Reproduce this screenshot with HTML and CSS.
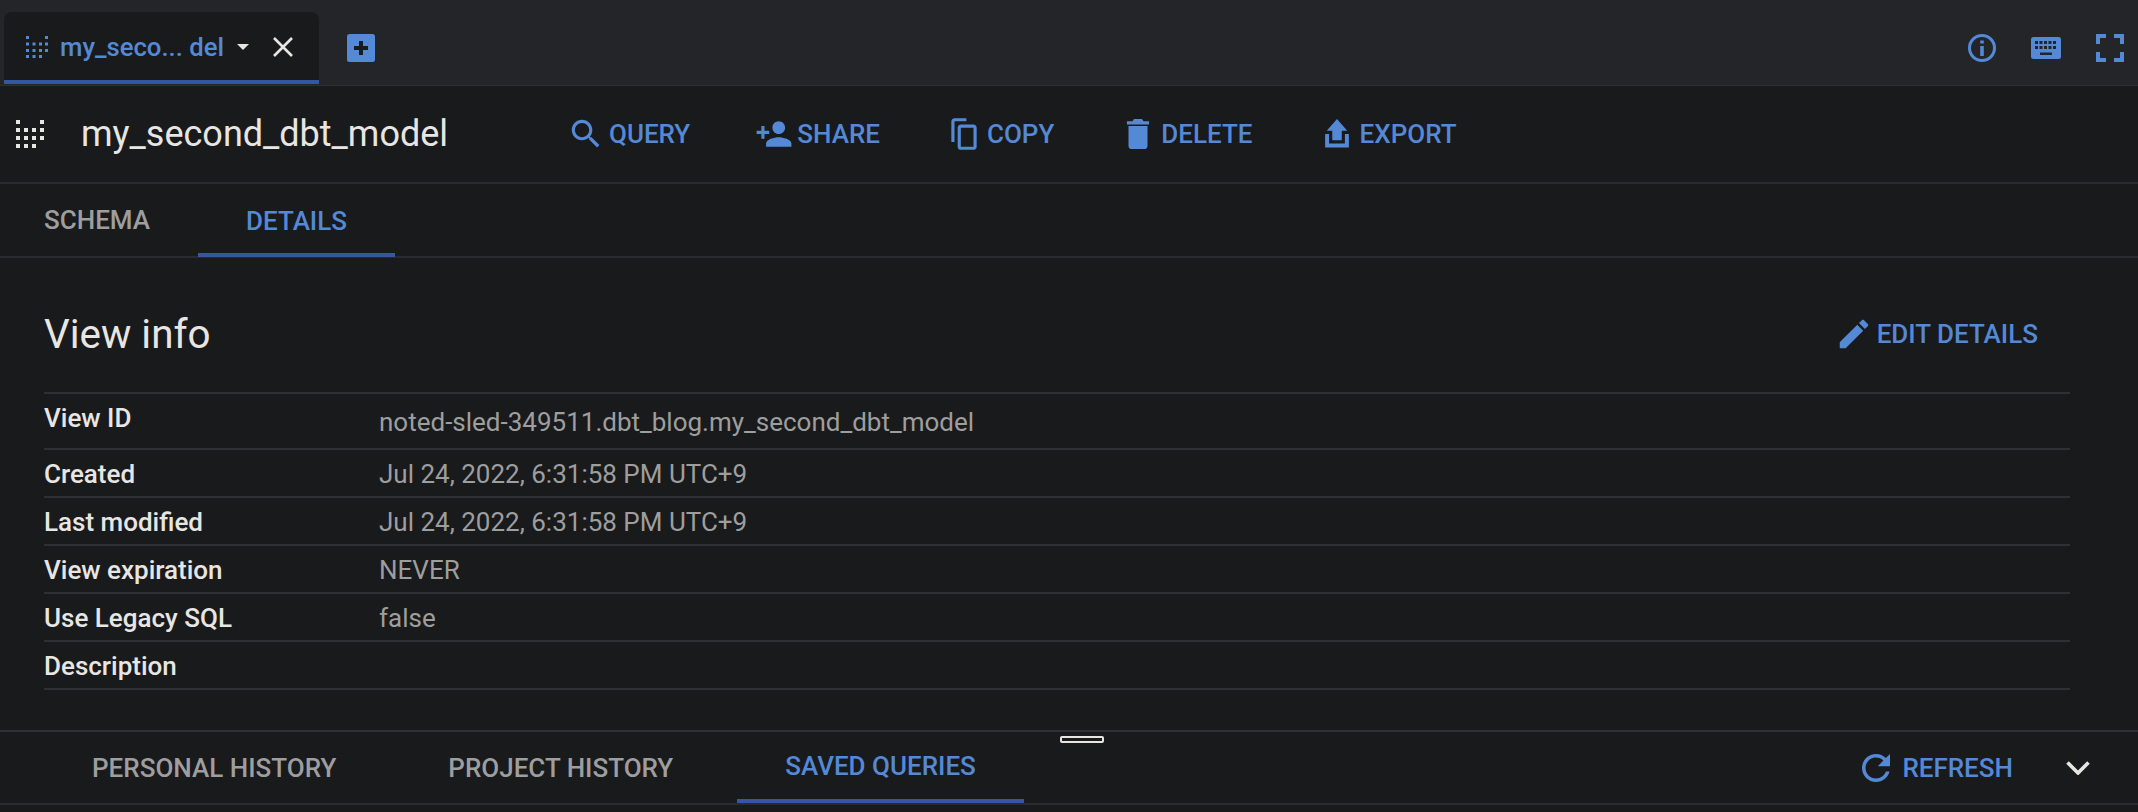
FILE: index.html
```html
<!DOCTYPE html>
<html lang="en">
<head>
<meta charset="utf-8">
<title>my_second_dbt_model</title>
<link rel="stylesheet" href="styles.css">
</head>
<body>
<div class="page">
  <header class="tabbar">
    <div class="tab">
      <svg class="tab-grid" viewBox="0 0 24 22" fill="currentColor"><path d="M0 0h3v3H0zM19 0h3v3h-3zM0 6.500h3v3H0zM6.500 6.500h3v3h-3zM13 6.500h3v3h-3zM19 6.500h3v3h-3zM0 13h3v3H0zM6.500 13h3v3h-3zM13 13h3v3h-3zM19 13h3v3h-3zM0 19h3v3H0zM6.500 19h3v3h-3zM13 19h3v3h-3z"/></svg>
      <span class="tab-name">my_seco... del</span>
      <svg class="tab-caret" viewBox="0 0 12 6" fill="currentColor"><path d="M0 0h12L6 6z"/></svg>
      <svg class="tab-close" viewBox="0 0 20 20" fill="none" stroke="currentColor" stroke-width="2.600"><path d="M1 1l18 18M19 1L1 19"/></svg>
    </div>
    <svg class="tab-add" viewBox="0 0 28 28"><rect width="28" height="28" rx="2.500" fill="#5489d6"/><path d="M12 7h4v5h5v4h-5v5h-4v-5H7v-4h5z" fill="#191a1c"/></svg>
    <div class="bar-icons">
      <svg class="bar-info" viewBox="0 0 28 28" fill="none" stroke="currentColor"><circle cx="14" cy="14" r="12.500" stroke-width="3"/><path d="M14 12v10" stroke-width="3.600"/><path d="M14 6.500v3" stroke-width="3.600"/></svg>
      <svg class="bar-keyboard" viewBox="0 0 30 22"><rect width="30" height="22" rx="2.500" fill="currentColor"/><path d="M4 4h3v3H4zM8.500 4h3v3h-3zM13 4h3v3h-3zM17.500 4h3v3h-3zM22 4h3v3h-3zM4 9h3v3H4zM8.500 9h3v3h-3zM13 9h3v3h-3zM17.500 9h3v3h-3zM22 9h3v3h-3zM9 15.500h12V18H9z" fill="#232528"/></svg>
      <svg class="bar-full" viewBox="0 0 28 28" fill="currentColor"><path d="M0 0h10v4H4v6H0zM18 0h10v10h-4V4h-6zM0 18h4v6h6v4H0zM24 18h4v10H18v-4h6z"/></svg>
    </div>
  </header>

  <section class="toolbar">
    <svg class="model-grid" viewBox="0 0 28 28" fill="currentColor"><path d="M0 0h4v4H0zM24 0h4v4h-4zM0 8h4v4H0zM8 8h4v4H8zM16 8h4v4h-4zM24 8h4v4h-4zM0 16h4v4H0zM8 16h4v4H8zM16 16h4v4h-4zM24 16h4v4h-4zM0 24h4v4H0zM8 24h4v4H8zM16 24h4v4h-4z"/></svg>
    <h1 class="model-title">my_second_dbt_model</h1>
    <div class="actions">
      <a class="action"><svg class="icon" viewBox="0 0 24 24"><path d="M15.500 14h-.79l-.28-.27C15.410 12.590 16 11.110 16 9.500 16 5.910 13.090 3 9.500 3S3 5.910 3 9.500 5.910 16 9.500 16c1.610 0 3.090-.59 4.230-1.570l.27.28v.79l5 4.990L20.490 19l-4.990-5zm-6 0C7.010 14 5 11.990 5 9.500S7.010 5 9.500 5 14 7.010 14 9.500 11.990 14 9.500 14z"/></svg>QUERY</a>
      <a class="action"><svg class="icon" viewBox="0 0 24 24"><path d="M15 12c2.210 0 4-1.790 4-4s-1.790-4-4-4-4 1.790-4 4 1.790 4 4 4zm-9-2V7H4v3H1v2h3v3h2v-3h3v-2H6zm9 4c-2.670 0-8 1.340-8 4v2h16v-2c0-2.660-5.330-4-8-4z"/></svg>SHARE</a>
      <a class="action"><svg class="icon" viewBox="0 0 24 24"><path d="M13.500 2H6C4.900 2 4 2.900 4 4v13h2V4h7.500V2zM18 6H10C8.900 6 8 6.900 8 8v12c0 1.100.9 2 2 2h8c1.100 0 2-.9 2-2V8c0-1.100-.9-2-2-2zm0 14h-8V8h8v12z"/></svg>COPY</a>
      <a class="action"><svg class="icon" viewBox="0 0 24 24"><path d="M6 19.500c0 1.100.9 2 2 2h8c1.100 0 2-.9 2-2V7H6v12.500zM19 4h-3.500l-1-1.500h-5L8.500 4H5v2h14V4z"/></svg>DELETE</a>
      <a class="action"><svg class="icon" viewBox="0 0 24 24"><path d="M12 2.500L5.500 10H9v6h6v-6h3.500zM4.500 12v8.500h15V12h-2.500v6H7v-6z" /></svg>EXPORT</a>
    </div>
  </section>

  <nav class="tabs">
    <a class="tabs-item tabs-item-first">SCHEMA</a>
    <a class="tabs-item is-active">DETAILS</a>
  </nav>

  <main class="content">
    <div class="content-head">
      <h2 class="content-title">View info</h2>
      <a class="action"><svg class="icon" viewBox="0 0 24 24"><path d="M3 17.250V21h3.750L17.810 9.940l-3.750-3.750L3 17.250zM20.710 7.040c.39-.39.39-1.020 0-1.410l-2.340-2.340c-.39-.39-1.020-.39-1.410 0l-1.830 1.830 3.750 3.750 1.830-1.830z"/></svg>EDIT DETAILS</a>
    </div>
    <dl class="info">
      <div class="info-row info-row-first"><dt>View ID</dt><dd>noted-sled-349511.dbt_blog.my_second_dbt_model</dd></div>
      <div class="info-row"><dt>Created</dt><dd>Jul 24, 2022, 6:31:58 PM UTC+9</dd></div>
      <div class="info-row"><dt>Last modified</dt><dd>Jul 24, 2022, 6:31:58 PM UTC+9</dd></div>
      <div class="info-row"><dt>View expiration</dt><dd>NEVER</dd></div>
      <div class="info-row"><dt>Use Legacy SQL</dt><dd>false</dd></div>
      <div class="info-row"><dt>Description</dt><dd></dd></div>
    </dl>
  </main>

  <footer class="history">
    <span class="handle"></span>
    <div class="history-row">
      <nav class="history-tabs">
        <a class="history-item">PERSONAL HISTORY</a>
        <a class="history-item">PROJECT HISTORY</a>
        <a class="history-item is-active">SAVED QUERIES</a>
      </nav>
      <a class="action refresh"><svg class="icon icon-refresh" viewBox="4 4 16 16"><path d="M17.650 6.350C16.200 4.900 14.210 4 12 4c-4.420 0-7.990 3.580-7.990 8s3.570 8 7.990 8c3.730 0 6.840-2.550 7.730-6h-2.080c-.82 2.330-3.040 4-5.650 4-3.310 0-6-2.690-6-6s2.690-6 6-6c1.660 0 3.140.69 4.220 1.780L13 11h7V4l-2.350 2.350z"/></svg>REFRESH</a>
      <svg class="collapse" viewBox="0 0 24 14" fill="none" stroke="currentColor" stroke-width="3.600"><path d="M1.500 1.500L12 12 22.500 1.500"/></svg>
    </div>
  </footer>
</div>
</body>
</html>
```
FILE: styles.css
```css
* { box-sizing: border-box; }
html, body { margin: 0; padding: 0; background: #191a1c; }
body { font-family: Roboto, "Liberation Sans", sans-serif; color: #e8e6e3; }
svg { display: block; flex: none; }
h1, h2, dl, dd { margin: 0; font-weight: 400; }

.page { width: 2138px; height: 812px; display: flex; flex-direction: column; overflow: hidden; }

.tabbar { height: 86px; flex: none; display: flex; align-items: flex-start; padding: 12px 0 0 4px; background: #232528; border-bottom: 1px solid #2f3033; }
.tab { width: 315px; height: 72px; display: flex; align-items: center; padding: 2px 0 0 22px; background: #191a1c; border-radius: 8px 8px 0 0; border-bottom: 4px solid #3557a0; color: #5489d6; }
.tab-grid { width: 24px; height: 22px; }
.tab-name { margin-left: 10px; width: 177px; font-size: 25.700px; font-weight: 500; white-space: nowrap; }
.tab-caret { width: 12px; height: 6px; color: #e8e6e3; }
.tab-close { width: 20px; height: 20px; margin-left: 24px; color: #e8e6e3; }
.tab-add { width: 28px; height: 28px; margin: 22px 0 0 28px; }
.bar-icons { display: flex; align-items: center; margin: 22px 14px 0 auto; height: 28px; color: #5489d6; }
.bar-info { width: 28px; height: 28px; }
.bar-keyboard { width: 30px; height: 22px; margin-left: 35px; }
.bar-full { width: 28px; height: 28px; margin-left: 35px; }

.toolbar { height: 98px; flex: none; display: flex; align-items: center; padding-left: 16px; border-bottom: 2px solid #2a2b2e; }
.model-grid { width: 28px; height: 28px; }
.model-title { width: 486px; margin-left: 37px; font-size: 36px; color: #e8e6e3; white-space: nowrap; }
.actions { display: flex; gap: 65px; }

.action { display: flex; align-items: center; gap: 4px; font-size: 26px; font-weight: 500; color: #5489d6; white-space: nowrap; }
.icon { width: 38px; height: 38px; fill: currentColor; }
.icon-refresh { width: 28px; height: 28px; margin-right: 8px; }

.tabs { height: 74px; flex: none; display: flex; border-bottom: 2px solid #2a2b2e; }
.tabs-item { display: flex; align-items: center; padding: 0 48px; font-size: 26px; font-weight: 500; color: #9e9e9e; }
.tabs-item-first { padding-left: 44px; }
.tabs-item.is-active { color: #5489d6; border-bottom: 4px solid #3557a0; padding-top: 4px; margin-bottom: -1px; }

.content { flex: 1; padding: 0 68px 0 44px; }
.content-head { height: 134px; display: flex; align-items: center; justify-content: space-between; padding: 18px 32px 0 0; }
.content-title { font-size: 40.400px; font-weight: 400; color: #e8e6e3; }
.info { display: flex; flex-direction: column; border-top: 2px solid #2f3033; }
.info-row { height: 48px; display: flex; align-items: center; padding-top: 2px; border-bottom: 2px solid #2f3033; font-size: 26px; }
.info-row-first { height: 56px; padding-top: 0; }
.info-row dt { width: 335px; font-weight: 500; color: #e8e6e3; }
.info-row dd { color: #9e9e9e; }
.info-row-first dt { padding-bottom: 6px; }
.info-row-first dd { padding-top: 2px; }

.history { position: relative; height: 82px; flex: none; border-top: 2px solid #2f3033; }
.handle { position: absolute; left: 1060px; top: 4px; width: 44px; height: 7px; border: 2px solid #e8e6e3; border-radius: 2px; }
.history-row { height: 73px; display: flex; align-items: center; border-bottom: 2px solid #2a2b2e; }
.history-tabs { display: flex; align-self: stretch; gap: 16px; padding-left: 44px; }
.history-item { display: flex; align-items: center; padding: 0 48px; font-size: 26px; font-weight: 500; color: #9e9e9e; }
.history-item.is-active { color: #5489d6; border-bottom: 4px solid #3557a0; }
.refresh { margin-left: auto; }
.collapse { width: 24px; height: 14px; margin: 0 48px 0 53px; color: #e8e6e3; }
```
